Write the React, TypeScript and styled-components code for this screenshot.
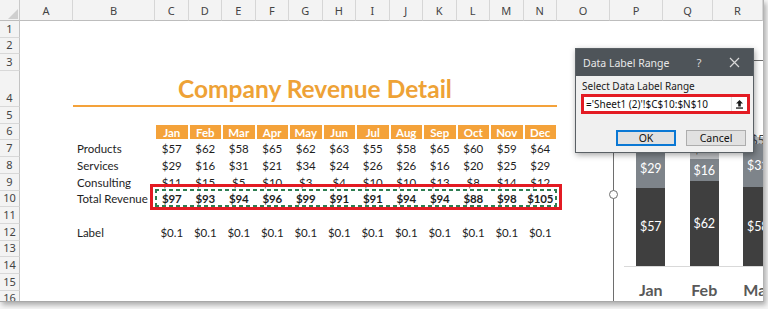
import React from 'react'
import styled, { createGlobalStyle } from 'styled-components'

const ORANGE = '#f4a23a'
const CELL_FONT = "Lato, 'Liberation Sans', sans-serif"
const UI_FONT = "'Noto Sans', 'Open Sans', 'Liberation Sans', sans-serif"

const COLUMNS = ['A', 'B', 'C', 'D', 'E', 'F', 'G', 'H', 'I', 'J', 'K', 'L', 'M', 'N', 'O', 'P', 'Q', 'R']
const COL_WIDTHS = [53, 82, ...Array(12).fill(33.5), 53, 53, 50, 50]
const ROW_COUNT = 16
const MONTHS = ['Jan', 'Feb', 'Mar', 'Apr', 'May', 'Jun', 'Jul', 'Aug', 'Sep', 'Oct', 'Nov', 'Dec']

const products = [57, 62, 58, 65, 62, 63, 55, 58, 65, 60, 59, 64]
const services = [29, 16, 31, 21, 34, 24, 26, 26, 16, 20, 25, 29]
const consulting = [11, 15, 5, 10, 3, 4, 10, 10, 13, 8, 14, 12]
const totals = products.map((p, i) => p + services[i] + consulting[i])

// sheet row number -> grid row (row 1 of the grid is the column header)
const gridRow = (n: number) => n + 1
// column letter index (A = 0) -> grid column (column 1 is the row header)
const gridCol = (i: number) => i + 2

const GlobalStyle = createGlobalStyle`
  html, body {
    margin: 0;
    padding: 0;
    background: #f6f6f6;
  }
  body {
    width: 768px;
    height: 309px;
    overflow: hidden;
    font-family: ${CELL_FONT};
  }
`

const Window = styled.div`
  position: relative;
  width: 764px;
  height: 302px;
  box-sizing: border-box;
  overflow: hidden;
  background: #fff;
  border-right: 1px solid #b4b4b4;
  border-bottom: 1px solid #a8a8a8;
  box-shadow: 2px 3px 5px rgba(0, 0, 0, 0.3);
`

const Sheet = styled.div`
  display: grid;
  grid-template-columns: 20px ${COL_WIDTHS.map((w) => `${w}px`).join(' ')};
  grid-template-rows: 21px repeat(3, 16.7px) 36px repeat(${ROW_COUNT - 4}, 16.7px);
`

const Corner = styled.div`
  grid-row: 1;
  grid-column: 1;
  background: #f3f3f3;
  border-right: 1px solid #c9c9c9;
  border-bottom: 1px solid #bdbdbd;
  display: flex;
  align-items: flex-end;
  justify-content: flex-end;
  padding: 0 1px 1px 0;
`

const ColHeader = styled.div<{ $col: number }>`
  grid-row: 1;
  grid-column: ${({ $col }) => $col};
  background: #f3f3f3;
  border-right: 1px solid #d6d6d6;
  border-bottom: 1px solid #bdbdbd;
  display: flex;
  align-items: center;
  justify-content: center;
  font-family: ${UI_FONT};
  font-size: 11px;
  color: #444;
`

const RowHeader = styled.div<{ $row: number }>`
  grid-column: 1;
  grid-row: ${({ $row }) => $row};
  background: #f3f3f3;
  border-right: 1px solid #c3c3c3;
  border-bottom: 1px solid #d8d8d8;
  display: flex;
  align-items: flex-end;
  justify-content: center;
  overflow: hidden;
  padding-bottom: 1px;
  font-family: ${UI_FONT};
  font-size: 11px;
  line-height: 14px;
  color: #444;
`

const Title = styled.div`
  grid-row: ${gridRow(4)};
  grid-column: ${gridCol(1)} / ${gridCol(14)};
  border-bottom: 2px solid ${ORANGE};
  display: flex;
  align-items: flex-end;
  justify-content: center;
  padding-bottom: 4px;
  font-size: 24.5px;
  font-weight: 700;
  line-height: 1;
  color: #eea236;
`

const MonthCell = styled.div<{ $col: number }>`
  grid-row: ${gridRow(6)};
  grid-column: ${({ $col }) => $col};
  background: ${ORANGE};
  border: 1px solid #fff;
  display: flex;
  align-items: center;
  justify-content: center;
  font-size: 11.5px;
  font-weight: 700;
  color: #fff;
`

const Label = styled.div<{ $row: number }>`
  grid-row: ${({ $row }) => $row};
  grid-column: ${gridCol(1)};
  display: flex;
  align-items: center;
  padding-left: 4px;
  font-size: 11.5px;
  color: #1e1e1e;
  white-space: nowrap;
`

const Value = styled.div<{ $row: number; $col: number; $bold?: boolean }>`
  grid-row: ${({ $row }) => $row};
  grid-column: ${({ $col }) => $col};
  display: flex;
  align-items: center;
  justify-content: center;
  font-size: 11.5px;
  letter-spacing: ${({ $bold }) => ($bold ? '-0.2px' : '0')};
  font-weight: ${({ $bold }) => ($bold ? 700 : 400)};
  color: #1e1e1e;
`

const RedFrame = styled.div`
  grid-row: ${gridRow(10)};
  grid-column: ${gridCol(2)} / ${gridCol(14)};
  margin: -7px -5px -3px -5px;
  border: 3px solid #e31b23;
  z-index: 2;
  pointer-events: none;
`

const dash = (dir: string) => `repeating-linear-gradient(${dir}, #2f7d52 0 4px, transparent 4px 7px)`

const CopyMarquee = styled.div`
  grid-row: ${gridRow(10)};
  grid-column: ${gridCol(2)} / ${gridCol(14)};
  margin: -2px 0 0 0;
  z-index: 3;
  pointer-events: none;
  background:
    ${dash('90deg')} top left / 100% 2px no-repeat,
    ${dash('90deg')} bottom left / 100% 2px no-repeat,
    ${dash('180deg')} top left / 2px 100% no-repeat,
    ${dash('180deg')} top right / 2px 100% no-repeat;
`

/* ---------- chart ---------- */

const PX_PER_DOLLAR = 1.37

const Chart = styled.div`
  position: absolute;
  left: 613px;
  top: 60px;
  width: 180px;
  height: 260px;
  background: #fff;
  border-left: 1px solid #6e6e6e;
  border-top: 1px solid #6e6e6e;
  padding-left: 10px;
  box-sizing: border-box;
`

const Handle = styled.div`
  position: absolute;
  left: -5px;
  top: 129px;
  width: 7px;
  height: 7px;
  border-radius: 50%;
  background: #fff;
  border: 1.5px solid #6e6e6e;
`

const Plot = styled.div`
  display: flex;
  align-items: flex-end;
  height: 205px;
  border-bottom: 1px solid #d9d9d9;
`

const Category = styled.div`
  flex: 0 0 53.5px;
  display: flex;
  justify-content: center;
`

const Bar = styled.div`
  width: 29px;
  display: flex;
  flex-direction: column;
`

const Segment = styled.div<{ $fill: string; $ink: string }>`
  background: ${({ $fill }) => $fill};
  color: ${({ $ink }) => $ink};
  display: flex;
  align-items: center;
  justify-content: center;
  font-size: 12.5px;
  white-space: nowrap;
`

const AxisLabels = styled.div`
  display: flex;
`

const AxisLabel = styled.div`
  flex: 0 0 53.5px;
  text-align: center;
  padding-top: 13px;
  font-size: 16px;
  font-weight: 700;
  color: #595959;
`

/* ---------- dialog ---------- */

const Dialog = styled.div`
  position: absolute;
  left: 575px;
  top: 48px;
  width: 179px;
  height: 105px;
  box-sizing: border-box;
  background: #f0f0f0;
  border: 1px solid #5a6065;
  box-shadow: 1px 2px 6px rgba(0, 0, 0, 0.35);
  font-family: ${UI_FONT};
  z-index: 5;
  display: flex;
  flex-direction: column;
`

const TitleBar = styled.div`
  height: 27px;
  flex: none;
  background: #4e5459;
  color: #e8e8e8;
  display: flex;
  align-items: center;
  padding: 0 13px 0 7px;
  font-size: 10.5px;
`

const TitleText = styled.span`
  flex: 1;
  white-space: nowrap;
`

const TitleButton = styled.span`
  width: 12px;
  margin-left: 24px;
  font-size: 11.5px;
  color: #d8d8d8;
  display: flex;
  justify-content: center;
`

const DialogBody = styled.div`
  padding: 4px 3px 0 6px;
  display: flex;
  flex-direction: column;
`

const FieldLabel = styled.div`
  font-size: 10px;
  color: #1a1a1a;
  line-height: 13px;
  margin-bottom: 1px;
  white-space: nowrap;
`

const RangeFrame = styled.div`
  margin-left: -1px;
  border: 3px solid #e31b23;
  height: 20px;
  box-sizing: border-box;
  display: flex;
  background: #fff;
`

const RangeInput = styled.div`
  flex: 1;
  font-size: 10px;
  line-height: 14px;
  padding-left: 2px;
  color: #111;
  white-space: nowrap;
`

const CollapseButton = styled.div`
  width: 15px;
  display: flex;
  align-items: center;
  justify-content: center;
  border-left: 1px solid #e2e2e2;
`

const ButtonRow = styled.div`
  display: flex;
  justify-content: flex-end;
  gap: 10px;
  margin-top: 16px;
  padding-right: 4px;
`

const DialogButton = styled.div<{ $default?: boolean }>`
  width: 60px;
  height: 16px;
  box-sizing: border-box;
  background: #e1e1e1;
  border: ${({ $default }) => ($default ? '2px solid #0a78d4' : '1px solid #adadad')};
  display: flex;
  align-items: center;
  justify-content: center;
  font-size: 10.5px;
  color: #111;
`

const chartSeries = [
  { values: consulting, fill: '#bdbfc2', ink: '#404040' },
  { values: services, fill: '#7e848a', ink: '#fff' },
  { values: products, fill: '#3f3f3f', ink: '#fff' },
]

const tableRows: { label: string; values: number[]; bold?: boolean }[] = [
  { label: 'Products', values: products },
  { label: 'Services', values: services },
  { label: 'Consulting', values: consulting },
  { label: 'Total Revenue', values: totals, bold: true },
]

const App = () => {
  return (
    <>
      <GlobalStyle />
      <Window>
        <Sheet>
          <Corner>
            <svg width="10" height="10" viewBox="0 0 10 10">
              <polygon points="10,0 10,10 0,10" fill="#cfcfcf" />
            </svg>
          </Corner>
          {COLUMNS.map((c, i) => (
            <ColHeader key={c} $col={gridCol(i)}>
              {c}
            </ColHeader>
          ))}
          {Array.from({ length: ROW_COUNT }, (_, i) => (
            <RowHeader key={i} $row={gridRow(i + 1)}>
              {i + 1}
            </RowHeader>
          ))}

          <Title>Company Revenue Detail</Title>

          {MONTHS.map((m, i) => (
            <MonthCell key={m} $col={gridCol(i + 2)}>
              {m}
            </MonthCell>
          ))}

          {tableRows.map((r, ri) => (
            <React.Fragment key={r.label}>
              <Label $row={gridRow(7 + ri)}>{r.label}</Label>
              {r.values.map((v, i) => (
                <Value key={i} $row={gridRow(7 + ri)} $col={gridCol(i + 2)} $bold={r.bold}>
                  ${v}
                </Value>
              ))}
            </React.Fragment>
          ))}

          <Label $row={gridRow(12)}>Label</Label>
          {MONTHS.map((m, i) => (
            <Value key={m} $row={gridRow(12)} $col={gridCol(i + 2)}>
              $0.1
            </Value>
          ))}

          <RedFrame />
          <CopyMarquee />
        </Sheet>

        <Chart>
          <Handle />
          <Plot>
            {MONTHS.slice(0, 3).map((m, i) => (
              <Category key={m}>
                <Bar>
                  {chartSeries.map((s, si) => (
                    <Segment
                      key={si}
                      $fill={s.fill}
                      $ink={s.ink}
                      style={{ height: s.values[i] * PX_PER_DOLLAR }}
                    >
                      ${s.values[i]}
                    </Segment>
                  ))}
                </Bar>
              </Category>
            ))}
          </Plot>
          <AxisLabels>
            {MONTHS.slice(0, 3).map((m) => (
              <AxisLabel key={m}>{m}</AxisLabel>
            ))}
          </AxisLabels>
        </Chart>

        <Dialog>
          <TitleBar>
            <TitleText>Data Label Range</TitleText>
            <TitleButton>?</TitleButton>
            <TitleButton>
              <svg width="11" height="11" viewBox="0 0 11 11">
                <path d="M1 1 L10 10 M10 1 L1 10" stroke="#d8d8d8" strokeWidth="1.2" />
              </svg>
            </TitleButton>
          </TitleBar>
          <DialogBody>
            <FieldLabel>Select Data Label Range</FieldLabel>
            <RangeFrame>
              <RangeInput>='Sheet1 (2)'!$C$10:$N$10</RangeInput>
              <CollapseButton>
                <svg width="9" height="10" viewBox="0 0 9 10">
                  <path d="M4.5 1 L1 4.6 H3.2 V7.4 H5.8 V4.6 H8 Z" fill="#1a1a1a" />
                  <rect x="1" y="8.4" width="7" height="1.3" fill="#1a1a1a" />
                </svg>
              </CollapseButton>
            </RangeFrame>
            <ButtonRow>
              <DialogButton $default>OK</DialogButton>
              <DialogButton>Cancel</DialogButton>
            </ButtonRow>
          </DialogBody>
        </Dialog>
      </Window>
    </>
  )
}

export default App
